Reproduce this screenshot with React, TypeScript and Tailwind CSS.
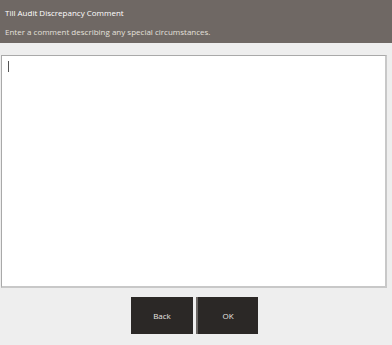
export default function App() {
  return (
    <div className="w-[392px] h-[345px] bg-[#eeeeee] flex flex-col" style={{ fontFamily: '"Open Sans", "Noto Sans", sans-serif' }}>
      <div className="h-[43px] bg-[#6f6864] flex flex-col px-[5px] pt-[8px] gap-[9px]">
        <div className="text-[8px] leading-[10px] text-white">Till Audit Discrepancy Comment</div>
        <div className="text-[8px] leading-[10px] text-[#e4e0dc]">Enter a comment describing any special circumstances.</div>
      </div>
      <div className="px-[1px] pt-[12px]">
        <div className="w-[386px] h-[233px] bg-white border border-[#a9a9a9] border-r-2 border-b-2 border-r-[#c8c8c8] border-b-[#c8c8c8] relative">
          <div className="absolute left-[6px] top-[5px] w-[1px] h-[11px] bg-[#555]" />
        </div>
      </div>
      <div className="flex justify-center gap-[3px] pt-[9px] pr-[3px]">
        <button className="w-[62px] h-[37px] bg-[#2b2826] text-[#e8e4e0] text-[8px]">Back</button>
        <button className="w-[62px] h-[37px] bg-[#2b2826] text-[#e8e4e0] text-[8px] border-l-2 border-l-[#6a6663]">OK</button>
      </div>
    </div>
  );
}
